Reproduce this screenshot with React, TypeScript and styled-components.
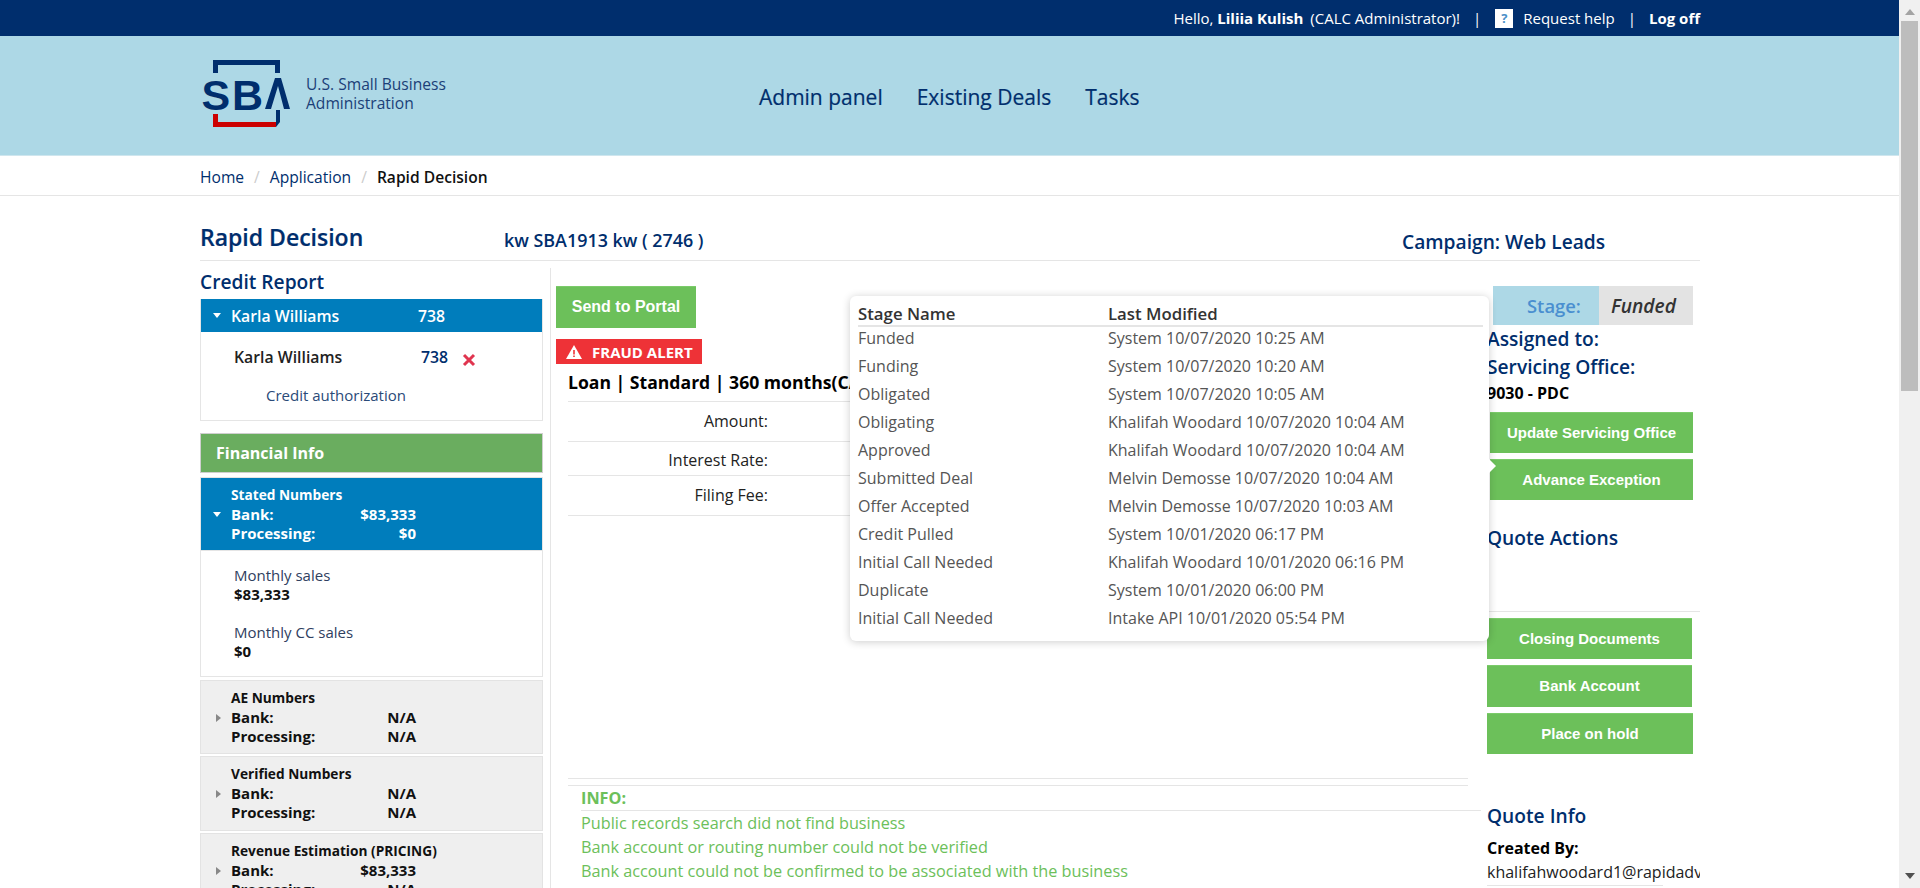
import React from "react";
import styled, { createGlobalStyle } from "styled-components";

const NAVY = "#002e6d";
const GREEN = "#6cc05a";
const BLUE = "#007dbc";
const LINE = "#e5e5e5";

const Global = createGlobalStyle`
  body { margin: 0; font-family: "Open Sans", sans-serif; color: #000; background: #fff; }
  * { box-sizing: border-box; }
`;

const Page = styled.div`
  min-height: 2050px;
`;
const ScrollTrack = styled.div`
  position: fixed;
  top: 0;
  right: 0;
  bottom: 0;
  width: 21px;
  background: #f0f0f0;
  z-index: 10;
  display: flex;
  flex-direction: column;
  align-items: center;
`;
const ScrollUp = styled.div`
  margin-top: 9px;
  width: 0;
  height: 0;
  border-left: 5px solid transparent;
  border-right: 5px solid transparent;
  border-bottom: 6px solid #a3a3a3;
`;
const ScrollThumb = styled.div`
  margin-top: 6px;
  width: 17px;
  height: 370px;
  background: #bdbdbd;
`;
const ScrollDown = styled.div`
  margin-top: auto;
  margin-bottom: 9px;
  width: 0;
  height: 0;
  border-left: 5px solid transparent;
  border-right: 5px solid transparent;
  border-top: 6px solid #505050;
`;
const Wrap = styled.div`
  width: 1500px;
  margin-left: 200px;
`;
const TopBar = styled.div`
  height: 36px;
  background: ${NAVY};
  color: #fff;
  font-size: 15px;
`;
const TopInner = styled(Wrap)`
  height: 36px;
  display: flex;
  justify-content: flex-end;
  align-items: center;
`;
const Role = styled.span`
  margin-left: 7px;
`;
const Bar = styled.span`
  margin: 0 13px;
`;
const HelpBox = styled.span`
  width: 18px;
  height: 19px;
  background: #fff;
  color: #4a90c8;
  font-size: 13px;
  font-weight: 700;
  display: flex;
  align-items: center;
  justify-content: center;
  margin-left: 1px;
  margin-right: 10px;
`;
const Header = styled.header`
  height: 120px;
  background: #add8e6;
  border-bottom: 1px solid #cfe6ee;
`;
const HeaderInner = styled(Wrap)`
  height: 119px;
  display: flex;
  align-items: flex-start;
`;
const LogoSvg = styled.svg`
  width: 90px;
  height: 72px;
  margin: 23px 0 0 3px;
  flex: none;
  overflow: visible;
`;
const LogoText = styled.div`
  margin: 39px 0 0 13px;
  width: 453px;
  flex: none;
  font-size: 15.6px;
  line-height: 19px;
  color: #1b3f78;
`;
const Nav = styled.nav`
  display: flex;
  gap: 34px;
  margin-top: 47px;
  font-size: 21px;
  line-height: 28px;
  color: ${NAVY};
  -webkit-text-stroke: 0.2px ${NAVY};
`;
const Crumbs = styled.div`
  height: 40px;
  border-bottom: 1px solid ${LINE};
`;
const CrumbInner = styled(Wrap)`
  height: 39px;
  padding-top: 2px;
  display: flex;
  align-items: center;
  font-size: 15.6px;
  color: ${NAVY};
`;
const Slash = styled.span`
  color: #ccc;
  margin: 0 10px;
`;
const CrumbNow = styled.b`
  color: #111;
  font-weight: 600;
`;
const TitleRow = styled.div`
  height: 65px;
  border-bottom: 1px solid ${LINE};
  display: grid;
  grid-template-columns: 304px 898px 1fr;
  align-items: end;
  color: ${NAVY};
`;
const H1 = styled.h1`
  margin: 0 0 8px;
  font-size: 23px;
  line-height: 30px;
  font-weight: 600;
  -webkit-text-stroke: 0.2px ${NAVY};
`;
const Deal = styled.div`
  font-size: 17.9px;
  line-height: 24px;
  font-weight: 600;
  margin-bottom: 8px;
`;
const Campaign = styled.div`
  font-size: 19.2px;
  line-height: 24px;
  font-weight: 600;
  margin-bottom: 6px;
`;
const Columns = styled.div`
  display: grid;
  grid-template-columns: 343px 944px 213px;
  margin-top: 7px;
  position: relative;
`;
const Left = styled.aside`
  width: 343px;
`;
const SectionTitle = styled.h2`
  margin: 0;
  font-size: 19.2px;
  line-height: 28px;
  font-weight: 600;
  color: ${NAVY};
`;
const ReportPanel = styled.section`
  margin-top: 3px;
  height: 122px;
  border: 1px solid ${LINE};
  border-top: 0;
`;
const BlueRow = styled.div`
  height: 33px;
  background: ${BLUE};
  color: #fff;
  font-size: 15.8px;
  font-weight: 600;
  display: grid;
  grid-template-columns: 30px 187px auto;
  align-items: center;
`;
const Tri = styled.span<{ $open?: boolean }>`
  justify-self: start;
  width: 0;
  height: 0;
  ${(p) =>
    p.$open
      ? `margin-left: 12px; border-left: 4.5px solid transparent; border-right: 4.5px solid transparent; border-top: 5px solid #fff;`
      : `margin-left: 15px; border-top: 4.5px solid transparent; border-bottom: 4.5px solid transparent; border-left: 5px solid #888;`}
`;
const PersonRow = styled.div`
  display: grid;
  grid-template-columns: 187px 41px auto;
  align-items: center;
  margin: 13px 0 0 33px;
  height: 24px;
  font-size: 15.8px;
  font-weight: 600;
  color: #222;
`;
const Score = styled.span`
  color: ${NAVY};
`;
const RemoveIcon = styled.svg`
  width: 14px;
  height: 14px;
  margin-top: 5px;
`;
const AuthLink = styled.div`
  margin: 14px 0 0 65px;
  font-size: 15px;
  line-height: 24px;
  color: #2a4a78;
`;
const FinancialHead = styled.div`
  margin-top: 12px;
  height: 40px;
  background: #6aad5f;
  border: 1px solid #cfcfcf;
  color: #fff;
  font-size: 16px;
  font-weight: 700;
  display: flex;
  align-items: center;
  padding-left: 15px;
`;
const NumbersPanel = styled.div<{ $open?: boolean; $gap: number; $h?: number }>`
  margin-top: ${(p) => p.$gap}px;
  height: ${(p) => p.$h ?? 74}px;
  border: 1px solid ${(p) => (p.$open ? "#e5e5e5" : "#e3e3e3")};
  background: ${(p) => (p.$open ? BLUE : "#efefef")};
  color: ${(p) => (p.$open ? "#fff" : "#111")};
  padding-top: 8px;
  display: grid;
  grid-template-columns: 30px 156px 29px;
  grid-auto-rows: 19px;
  align-items: center;
  font-size: 15px;
  font-weight: 700;
  line-height: 19px;
`;
const NumTitle = styled.div`
  grid-column: 2 / 5;
  align-self: start;
  white-space: nowrap;
  font-size: 13.7px;
  line-height: 17px;
`;
const TriCell = styled.div`
  grid-column: 1;
  grid-row: 2;
  display: flex;
  height: 19px;
  align-items: center;
`;
const NumLabel = styled.div<{ $row: number }>`
  grid-column: 2;
  grid-row: ${(p) => p.$row};
`;
const NumValue = styled.div<{ $row: number }>`
  grid-column: 2 / 4;
  grid-row: ${(p) => p.$row};
  justify-self: end;
`;
const OpenBody = styled.div`
  height: 126px;
  border: 1px solid ${LINE};
  border-top: 0;
  padding: 15px 0 0 33px;
  font-size: 15px;
  line-height: 19px;
  color: #2f4060;
`;
const SalesBlock = styled.div`
  margin-bottom: 19px;
  b {
    display: block;
    color: #111;
    font-weight: 700;
  }
`;
const Center = styled.main`
  border-left: 1px solid ${LINE};
  margin-left: 7px;
  width: 937px;
  padding: 18px 0 0 5px;
`;
const ActionButton = styled.button<{ $w?: number; $h?: number; $ml?: number }>`
  display: block;
  width: ${(p) => p.$w ?? 205}px;
  height: ${(p) => p.$h ?? 41}px;
  margin: 0 0 6px ${(p) => p.$ml ?? 0}px;
  padding: 0 0 2px;
  border: 0;
  border-top: 1px solid #7bcb6a;
  background: ${GREEN};
  color: #fff;
  font-family: "Liberation Sans", Arial, sans-serif;
  font-size: 15px;
  font-weight: 700;
`;
const Portal = styled(ActionButton)`
  font-size: 16px;
  margin-bottom: 11px;
`;
const FraudBadge = styled.div`
  width: 146px;
  height: 25px;
  background: #ee3237;
  color: #fff;
  font-size: 15px;
  font-weight: 700;
  display: flex;
  align-items: center;
  gap: 10px;
  padding-left: 10px;
`;
const LoanBlock = styled.div`
  margin-left: 12px;
  width: 900px;
`;
const LoanTitle = styled.div`
  height: 38px;
  padding-top: 5px;
  border-bottom: 1px solid ${LINE};
  font-size: 17.6px;
  line-height: 26px;
  font-weight: 700;
  white-space: nowrap;
`;
const LoanRow = styled.div<{ $h: number; $top?: number; $bottom?: number }>`
  height: ${(p) => p.$h}px;
  border-bottom: 1px solid ${LINE};
  padding: ${(p) => p.$top ?? 0}px 700px ${(p) => p.$bottom ?? 0}px 0;
  font-size: 16px;
  line-height: 24px;
  color: #222;
  display: flex;
  justify-content: flex-end;
  align-items: center;
`;
const InfoRule = styled.div`
  margin-top: 262px;
  height: 8px;
  border-top: 1px solid ${LINE};
  border-bottom: 1px solid ${LINE};
`;
const InfoBlock = styled.div`
  margin-left: 13px;
  color: ${GREEN};
  font-size: 16.25px;
  line-height: 24px;
  width: 900px;
`;
const InfoTitle = styled.div`
  font-weight: 700;
  border-bottom: 1px solid ${LINE};
  height: 25px;
`;
const Right = styled.aside`
  width: 213px;
  padding-top: 18px;
`;
const StageRow = styled.div`
  display: grid;
  grid-template-columns: 106px 94px;
  margin-left: 6px;
  height: 39px;
  line-height: 39px;
  font-weight: 600;
`;
const StageLabel = styled.div`
  background: #add8e6;
  color: #4a8fd0;
  padding-left: 34px;
  font-size: 18.4px;
`;
const StageValue = styled.div`
  background: #e3e3e3;
  color: #333;
  font-style: italic;
  padding-left: 12px;
  font-size: 19.2px;
`;
const SideHead = styled.div`
  font-size: 19.2px;
  line-height: 28px;
  font-weight: 600;
  color: ${NAVY};
  white-space: nowrap;
`;
const Office = styled.div`
  font-size: 16px;
  line-height: 24px;
  font-weight: 700;
  margin-bottom: 7px;
`;
const QuoteActions = styled(SideHead)`
  margin: 24px 0 6px;
  height: 88px;
  border-bottom: 1px solid ${LINE};
`;
const QuoteInfo = styled(SectionTitle)`
  margin-top: 48px;
`;
const CreatedBy = styled.div`
  margin-top: 6px;
  font-size: 16px;
  line-height: 24px;
  font-weight: 700;
`;
const Email = styled.div`
  width: 213px;
  overflow: hidden;
  white-space: nowrap;
  font-size: 16px;
  line-height: 24px;
  color: #222;
`;
const EmailRule = styled.div`
  width: 176px;
  margin-top: 1px;
  border-top: 1px solid ${LINE};
`;
const Popup = styled.div`
  position: absolute;
  left: 650px;
  top: 28px;
  width: 639px;
  height: 345px;
  background: #fff;
  border-radius: 6px;
  box-shadow: 0 1px 8px rgba(0, 0, 0, 0.2);
  padding: 5px 6px 0 8px;
  color: #555;
  font-size: 16px;
  &::after {
    content: "";
    position: absolute;
    right: -7px;
    top: 163px;
    border-top: 7px solid transparent;
    border-bottom: 7px solid transparent;
    border-left: 7px solid #fff;
  }
`;
const PopupRow = styled.div<{ $head?: boolean }>`
  display: grid;
  grid-template-columns: 250px 1fr;
  height: 28px;
  line-height: 23px;
  white-space: nowrap;
  ${(p) =>
    p.$head
      ? `height: 26px; line-height: 26px; font-size: 16.8px; font-weight: 600; color: #333; border-bottom: 2px solid #e5e5e5;`
      : ``}
`;

const stages: [string, string][] = [
  ["Funded", "System 10/07/2020 10:25 AM"],
  ["Funding", "System 10/07/2020 10:20 AM"],
  ["Obligated", "System 10/07/2020 10:05 AM"],
  ["Obligating", "Khalifah Woodard 10/07/2020 10:04 AM"],
  ["Approved", "Khalifah Woodard 10/07/2020 10:04 AM"],
  ["Submitted Deal", "Melvin Demosse 10/07/2020 10:04 AM"],
  ["Offer Accepted", "Melvin Demosse 10/07/2020 10:03 AM"],
  ["Credit Pulled", "System 10/01/2020 06:17 PM"],
  ["Initial Call Needed", "Khalifah Woodard 10/01/2020 06:16 PM"],
  ["Duplicate", "System 10/01/2020 06:00 PM"],
  ["Initial Call Needed", "Intake API 10/01/2020 05:54 PM"],
];

const Numbers = ({
  title,
  bank,
  proc,
  open,
  gap,
  h,
}: {
  title: string;
  bank: string;
  proc: string;
  open?: boolean;
  gap: number;
  h?: number;
}) => (
  <NumbersPanel $open={open} $gap={gap} $h={h}>
    <NumTitle>{title}</NumTitle>
    <TriCell>
      <Tri $open={open} />
    </TriCell>
    <NumLabel $row={2}>Bank:</NumLabel>
    <NumValue $row={2}>{bank}</NumValue>
    <NumLabel $row={3}>Processing:</NumLabel>
    <NumValue $row={3}>{proc}</NumValue>
  </NumbersPanel>
);

export default function App() {
  return (
    <Page>
      <Global />
      <ScrollTrack>
        <ScrollUp />
        <ScrollThumb />
        <ScrollDown />
      </ScrollTrack>
      <TopBar>
        <TopInner>
          <span>
            Hello, <b>Liliia Kulish</b>
          </span>
          <Role>(CALC Administrator)!</Role>
          <Bar>|</Bar>
          <HelpBox>?</HelpBox>
          <span>Request help</span>
          <Bar>|</Bar>
          <b>Log off</b>
        </TopInner>
      </TopBar>
      <Header>
        <HeaderInner>
          <LogoSvg viewBox="0 0 90 72">
            <path d="M10 14V1h67v13h-5V6H15v8z" fill="#002e6d" />
            <text x="-1.5" y="50.5" fontFamily="Liberation Sans" fontWeight="700" fontSize="43" fill="#002e6d">
              S
            </text>
            <text x="29" y="50.5" fontFamily="Liberation Sans" fontWeight="700" fontSize="43" fill="#002e6d">
              B
            </text>
            <path d="M62 50 72 19h6l9 31h-6l-6-23-7 23z" fill="#002e6d" />
            <path d="M73 51h4v12l-4 5z" fill="#002e6d" />
            <path d="M10 55h5v8h58v5H10z" fill="#cc0000" />
          </LogoSvg>
          <LogoText>
            U.S. Small Business
            <br />
            Administration
          </LogoText>
          <Nav>
            <span>Admin panel</span>
            <span>Existing Deals</span>
            <span>Tasks</span>
          </Nav>
        </HeaderInner>
      </Header>
      <Crumbs>
        <CrumbInner>
          <span>Home</span>
          <Slash>/</Slash>
          <span>Application</span>
          <Slash>/</Slash>
          <CrumbNow>Rapid Decision</CrumbNow>
        </CrumbInner>
      </Crumbs>
      <Wrap>
        <TitleRow>
          <H1>Rapid Decision</H1>
          <Deal>kw SBA1913 kw ( 2746 )</Deal>
          <Campaign>Campaign: Web Leads</Campaign>
        </TitleRow>
        <Columns>
          <Left>
            <SectionTitle>Credit Report</SectionTitle>
            <ReportPanel>
              <BlueRow>
                <Tri $open />
                <span>Karla Williams</span>
                <span>738</span>
              </BlueRow>
              <PersonRow>
                <span>Karla Williams</span>
                <Score>738</Score>
                <RemoveIcon viewBox="0 0 14 14">
                  <path d="M2 2 12 12M12 2 2 12" stroke="#e0354f" strokeWidth="3" />
                </RemoveIcon>
              </PersonRow>
              <AuthLink>Credit authorization</AuthLink>
            </ReportPanel>
            <FinancialHead>Financial Info</FinancialHead>
            <Numbers title="Stated Numbers" bank="$83,333" proc="$0" open gap={4} />
            <OpenBody>
              <SalesBlock>
                Monthly sales
                <b>$83,333</b>
              </SalesBlock>
              <SalesBlock>
                Monthly CC sales
                <b>$0</b>
              </SalesBlock>
            </OpenBody>
            <Numbers title="AE Numbers" bank="N/A" proc="N/A" gap={3} />
            <Numbers title="Verified Numbers" bank="N/A" proc="N/A" gap={2} h={75} />
            <Numbers title="Revenue Estimation (PRICING)" bank="$83,333" proc="N/A" gap={2} h={75} />
          </Left>
          <Center>
            <Portal $w={140} $h={42}>Send to Portal</Portal>
            <FraudBadge>
              <svg width="16" height="14" viewBox="0 0 16 14">
                <path d="M8 0 16 14H0z" fill="#fff" />
                <path d="M7.2 5h1.6v4.5H7.2zM7.2 10.5h1.6V12H7.2z" fill="#ee3237" />
              </svg>
              FRAUD ALERT
            </FraudBadge>
            <LoanBlock>
              <LoanTitle>Loan | Standard | 360 months(CALC)</LoanTitle>
              <LoanRow $h={40} $bottom={2}>Amount:</LoanRow>
              <LoanRow $h={34} $top={3}>Interest Rate:</LoanRow>
              <LoanRow $h={40} $bottom={2}>Filing Fee:</LoanRow>
              <InfoRule />
              <InfoBlock>
                <InfoTitle>INFO:</InfoTitle>
                <div>Public records search did not find business</div>
                <div>Bank account or routing number could not be verified</div>
                <div>Bank account could not be confirmed to be associated with the business</div>
              </InfoBlock>
            </LoanBlock>
          </Center>
          <Right>
            <StageRow>
              <StageLabel>Stage:</StageLabel>
              <StageValue>Funded</StageValue>
            </StageRow>
            <SideHead>Assigned to:</SideHead>
            <SideHead>Servicing Office:</SideHead>
            <Office>9030 - PDC</Office>
            <ActionButton $w={203} $ml={3}>Update Servicing Office</ActionButton>
            <ActionButton $w={203} $ml={3}>Advance Exception</ActionButton>
            <QuoteActions>Quote Actions</QuoteActions>
            <ActionButton>Closing Documents</ActionButton>
            <ActionButton $h={42}>Bank Account</ActionButton>
            <ActionButton $w={206}>Place on hold</ActionButton>
            <QuoteInfo>Quote Info</QuoteInfo>
            <CreatedBy>Created By:</CreatedBy>
            <Email>khalifahwoodard1@rapidadvance.com</Email>
            <EmailRule />
          </Right>
          <Popup>
            <PopupRow $head>
              <span>Stage Name</span>
              <span>Last Modified</span>
            </PopupRow>
            {stages.map(([name, by], i) => (
              <PopupRow key={i}>
                <span>{name}</span>
                <span>{by}</span>
              </PopupRow>
            ))}
          </Popup>
        </Columns>
      </Wrap>
    </Page>
  );
}
